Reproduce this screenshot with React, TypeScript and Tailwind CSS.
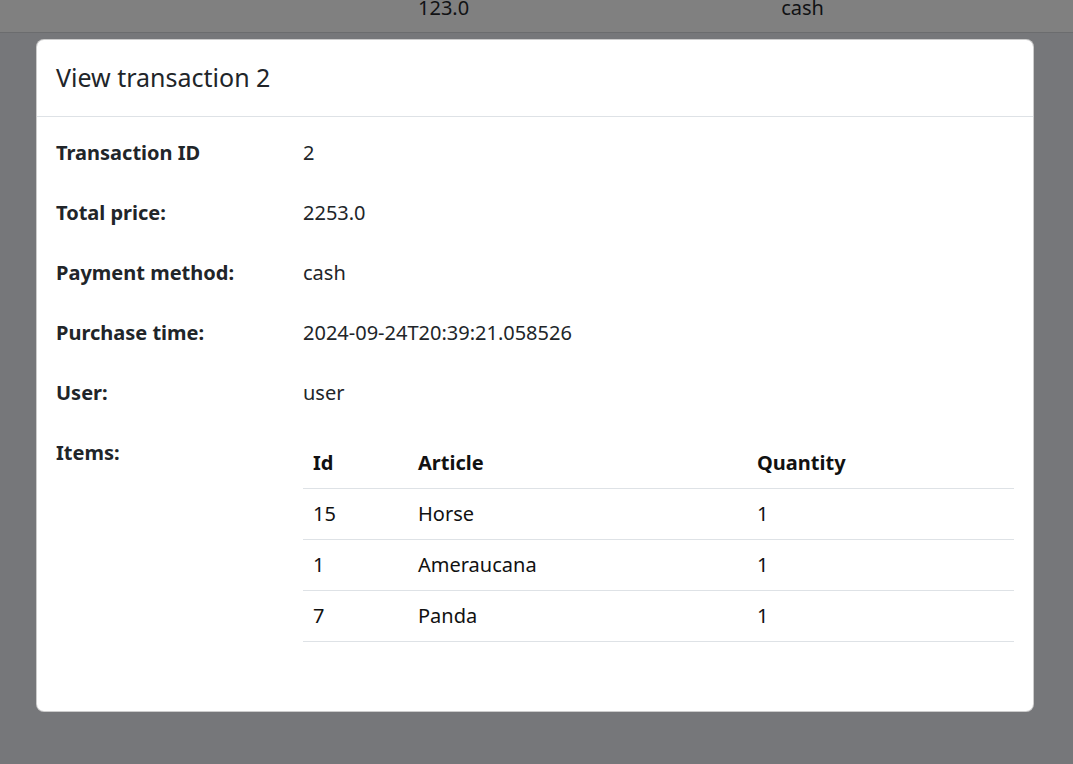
const FIELDS = [
  { label: "Transaction ID", value: "2" },
  { label: "Total price:", value: "2253.0" },
  { label: "Payment method:", value: "cash" },
  { label: "Purchase time:", value: "2024-09-24T20:39:21.058526" },
  { label: "User:", value: "user" },
];

const ITEMS = [
  { id: 15, article: "Horse", quantity: 1 },
  { id: 1, article: "Ameraucana", quantity: 1 },
  { id: 7, article: "Panda", quantity: 1 },
];

export default function App() {
  return (
    <div
      className="relative h-[764px] w-[1073px] overflow-hidden bg-[#76777a] text-[20px] leading-[30px] text-[#212529]"
      style={{ fontFamily: '"Noto Sans", "Open Sans", sans-serif' }}
    >
      {/* page behind the backdrop */}
      <div className="flex h-[33px] border-b border-[#6b6c6e] bg-[#808080] text-[#111214]">
        <div className="ml-[418px] -mt-[7px]">123.0</div>
        <div className="ml-[312px] -mt-[7px]">cash</div>
      </div>

      {/* modal */}
      <div className="absolute left-[36px] top-[39px] w-[998px] rounded-[8px] border border-black/20 bg-white">
        <div className="border-b border-[#dee2e6] px-[19px] pb-5 pt-[19px]">
          <h5 className="text-[25px] leading-[37px]">View transaction 2</h5>
        </div>

        <div className="px-[19px] pb-[69px] pt-[21px]">
          {FIELDS.map((f) => (
            <div key={f.label} className="mb-[30px] grid grid-cols-[247px_1fr]">
              <div className="font-bold">{f.label}</div>
              <div>{f.value}</div>
            </div>
          ))}

          <div className="grid grid-cols-[247px_1fr]">
            <div className="font-bold">Items:</div>
            <table className="w-full border-collapse text-left text-[#111]">
              <thead>
                <tr className="border-b border-[#dee2e6]">
                  <th className="w-[105px] px-[10px] py-[10px] font-bold">Id</th>
                  <th className="w-[339px] px-[10px] py-[10px] font-bold">Article</th>
                  <th className="px-[10px] py-[10px] font-bold">Quantity</th>
                </tr>
              </thead>
              <tbody>
                {ITEMS.map((it) => (
                  <tr key={it.id} className="border-b border-[#dee2e6]">
                    <td className="px-[10px] py-[10px]">{it.id}</td>
                    <td className="px-[10px] py-[10px]">{it.article}</td>
                    <td className="px-[10px] py-[10px]">{it.quantity}</td>
                  </tr>
                ))}
              </tbody>
            </table>
          </div>
        </div>
      </div>
    </div>
  );
}
